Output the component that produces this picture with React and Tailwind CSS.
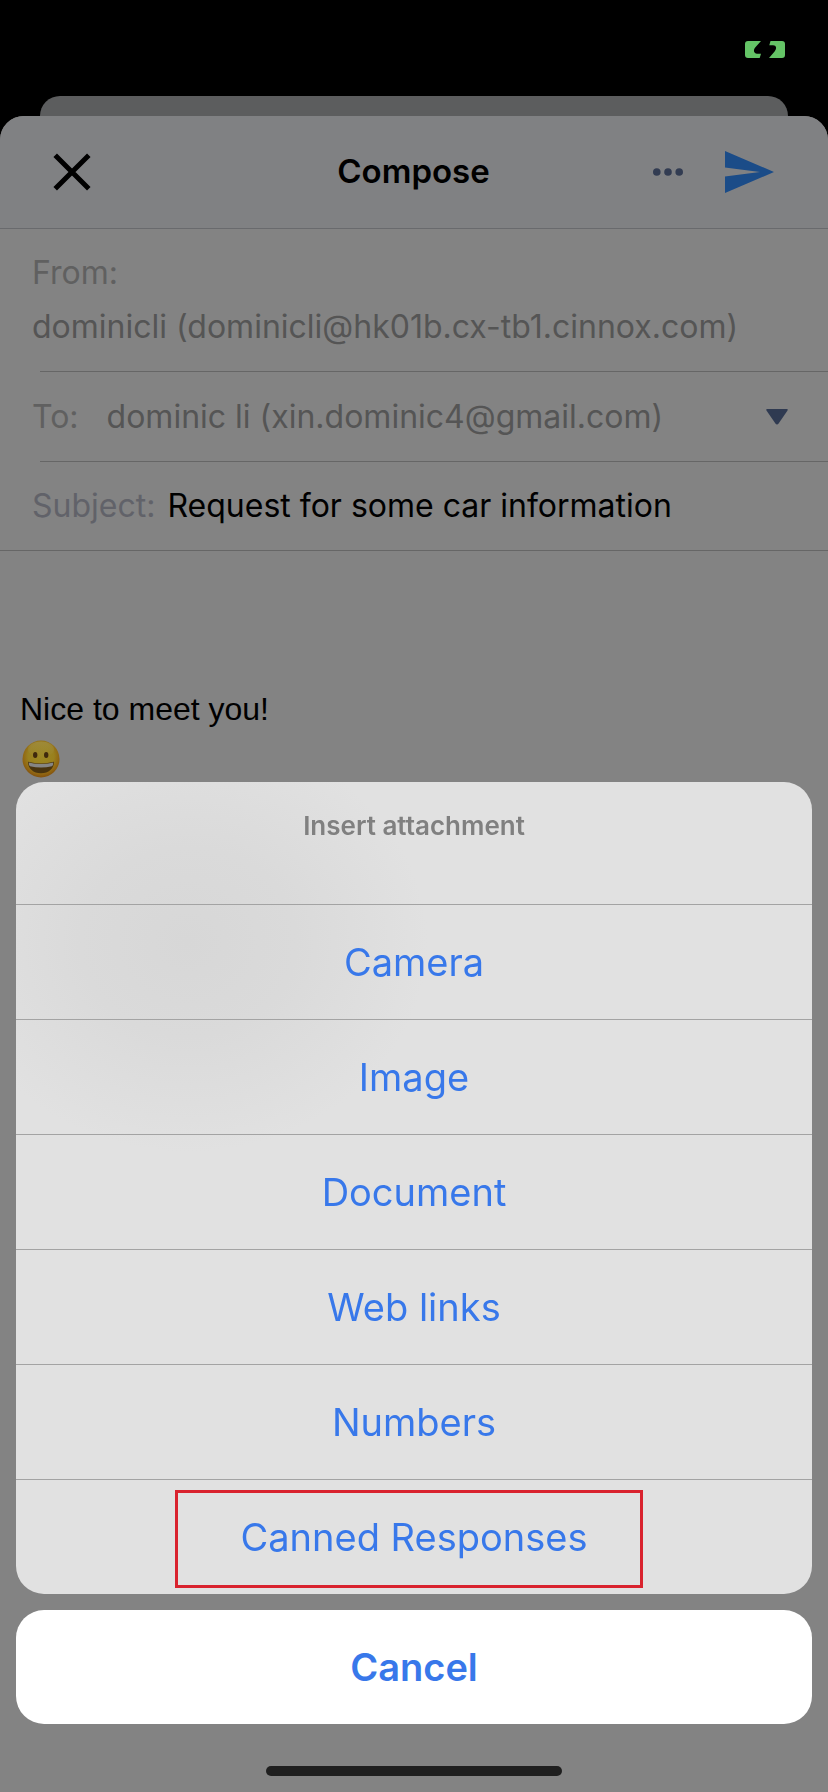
import React, { useState } from 'react';

const attachmentOptions = ['Camera', 'Image', 'Document', 'Web links', 'Numbers', 'Canned Responses'];

const BatteryIcon = () => (
    <svg viewBox="0 0 40 17" className="w-10 h-[17px]" aria-hidden="true">
        <path fill="#64c466" d="M3 0H16L10.2 6.6C8 9.2 8.8 12.7 12 12.7H16L14.7 17H3C1 17 0 16 0 14V3C0 1 1 0 3 0Z" />
        <path fill="#64c466" d="M25.5 0H37C39 0 40 1 40 3V14C40 16 39 17 37 17H24L29.6 10.4C32 7.5 31.5 4.3 28 4.2H24.3Z" />
    </svg>
);

const CloseIcon = () => (
    <svg viewBox="0 0 38 38" className="w-[38px] h-[38px]" fill="none" stroke="#000" strokeWidth="5" aria-hidden="true">
        <path d="M2.2 2.2L35.8 35.8M35.8 2.2L2.2 35.8" />
    </svg>
);

const MoreIcon = () => (
    <svg viewBox="0 0 30 8" className="w-[30px] h-2" fill="#323c52" aria-hidden="true">
        <circle cx="3.8" cy="4" r="3.8" />
        <circle cx="15" cy="4" r="3.8" />
        <circle cx="26.2" cy="4" r="3.8" />
    </svg>
);

const SendIcon = () => (
    <svg viewBox="0 0 49 42" className="w-[49px] h-[42px]" fill="#1b4c88" aria-hidden="true">
        <path d="M0 0L49 21L0 42V25.5L35 21L0 16.5Z" />
    </svg>
);

const CaretDownIcon = () => (
    <svg viewBox="0 0 22 16" className="w-[22px] h-4" aria-hidden="true">
        <path fill="#2f3a51" d="M1.2 0H20.8Q22.4 0 21.5 1.6L12.6 14.4Q11 16.4 9.4 14.4L.5 1.6Q-.4 0 1.2 0Z" />
    </svg>
);

const GrinIcon = () => (
    <svg viewBox="0 0 38 38" className="w-[38px] h-[38px]" role="img" aria-label="Grinning face">
        <defs>
            <radialGradient id="face" cx="50%" cy="42%" r="58%">
                <stop offset="0" stopColor="#9b8724" />
                <stop offset="0.6" stopColor="#99801e" />
                <stop offset="0.85" stopColor="#906512" />
                <stop offset="1" stopColor="#82500e" />
            </radialGradient>
            <linearGradient id="shine" x1="0" y1="0" x2="0" y2="1">
                <stop offset="0" stopColor="#a08f45" stopOpacity="0.7" />
                <stop offset="1" stopColor="#a08f45" stopOpacity="0" />
            </linearGradient>
        </defs>
        <circle cx="19" cy="19" r="18.5" fill="url(#face)" />
        <ellipse cx="19" cy="9.5" rx="13" ry="8" fill="url(#shine)" />
        <ellipse cx="13.2" cy="15" rx="2.2" ry="2.9" fill="#3f290d" />
        <ellipse cx="24.2" cy="15" rx="2.2" ry="2.9" fill="#3f290d" />
        <path fill="#49340f" d="M6 21.8Q19 25.4 32 21.8C32 28.5 26.8 33.3 19 33.3S6 28.5 6 21.8Z" />
        <path fill="#858585" d="M6.8 22.4Q19 25.8 31.2 22.4Q31.4 25.2 30 26.2Q19 29 8 26.2Q6.6 25.2 6.8 22.4Z" />
    </svg>
);

const AttachmentSheet = ({ onClose }) => {
    return (
        <div className="fixed inset-0 z-10 flex flex-col justify-end px-4">
            <div role="dialog" aria-label="Insert attachment" className="rounded-[28px] overflow-hidden bg-[#e1e1e1] bg-[radial-gradient(ellipse_240px_210px_at_172px_160px,#d7d7d7_0%,#dadada_45%,#e1e1e1_100%)]">
                <h2 className="h-[122px] pt-7 text-center text-[26px] leading-8 font-semibold text-[#808080]">Insert attachment</h2>
                {attachmentOptions.map((option) => (
                    <button key={option} type="button" className="relative block w-full h-[115px] border-t border-[#a3a3a3] text-[38px] text-[#3878ea]">
                        {option}
                        {option === 'Canned Responses' && (
                            <span className="absolute top-[10px] bottom-[6px] left-[159px] right-[169px] border-3 border-[#d9232e]" />
                        )}
                    </button>
                ))}
            </div>
            <button type="button" onClick={onClose} className="mt-4 h-[114px] rounded-[28px] bg-white text-[38px] font-semibold text-[#3878ea]">Cancel</button>
            <div className="mt-[42px] mb-4 mx-auto w-[296px] h-[10px] rounded-full bg-[#1f1f1f]" />
        </div>
    );
};

const App = () => {
    const [sheetOpen, setSheetOpen] = useState(true);
    const [to, setTo] = useState('dominic li (xin.dominic4@gmail.com)');
    const [subject, setSubject] = useState('Request for some car information');

    return (
        <div className="min-h-screen flex flex-col bg-black font-[Inter,sans-serif] text-[32px]">
            <div className="h-24 flex justify-end pt-[41px] pr-[43px]">
                <BatteryIcon />
            </div>
            <div className="mx-10 h-5 rounded-t-[20px] bg-[#5c5d5e]" />
            <main className="flex-1 rounded-t-[24px] overflow-hidden bg-[#838383]">
                <header className="h-[113px] grid grid-cols-3 items-center border-b border-[#696a6d] bg-[#808183] pl-[53px] pr-[54px]">
                    <button type="button" aria-label="Close" className="justify-self-start"><CloseIcon /></button>
                    <h1 className="text-center text-[33px] font-semibold">Compose</h1>
                    <div className="flex items-center justify-end gap-[42px]">
                        <button type="button" aria-label="More" onClick={() => setSheetOpen(true)}><MoreIcon /></button>
                        <button type="button" aria-label="Send"><SendIcon /></button>
                    </div>
                </header>

                <div className="h-[142px] px-8 pt-[17px] leading-[54px] text-[#555]">
                    <p className="text-[#606060]">From:</p>
                    <p className="whitespace-nowrap">dominicli (dominicli@hk01b.cx-tb1.cinnox.com)</p>
                </div>
                <hr className="ml-10 border-[#666]" />
                <div className="h-[89px] flex items-center pl-8 pr-10">
                    <label htmlFor="to" className="text-[#606060]">To:</label>
                    <input id="to" type="text" value={to} onChange={(e) => setTo(e.target.value)} className="ml-7 flex-1 min-w-0 text-[#555] outline-none" />
                    <button type="button" aria-label="Show more recipients"><CaretDownIcon /></button>
                </div>
                <hr className="ml-10 border-[#666]" />
                <div className="h-[89px] flex items-center px-8 border-b border-[#666]">
                    <label htmlFor="subject" className="text-[#616269]">Subject:</label>
                    <input id="subject" type="text" value={subject} onChange={(e) => setSubject(e.target.value)} className="ml-3 flex-1 min-w-0 text-black outline-none" />
                </div>

                <div className="px-5 pt-[138px] font-['Liberation_Sans',sans-serif] leading-10 text-black">
                    <p>Nice to meet you!</p>
                    <p className="pt-[11px] pl-[2px]"><GrinIcon /></p>
                </div>
            </main>
            {sheetOpen && <AttachmentSheet onClose={() => setSheetOpen(false)} />}
        </div>
    );
};

export default App;
